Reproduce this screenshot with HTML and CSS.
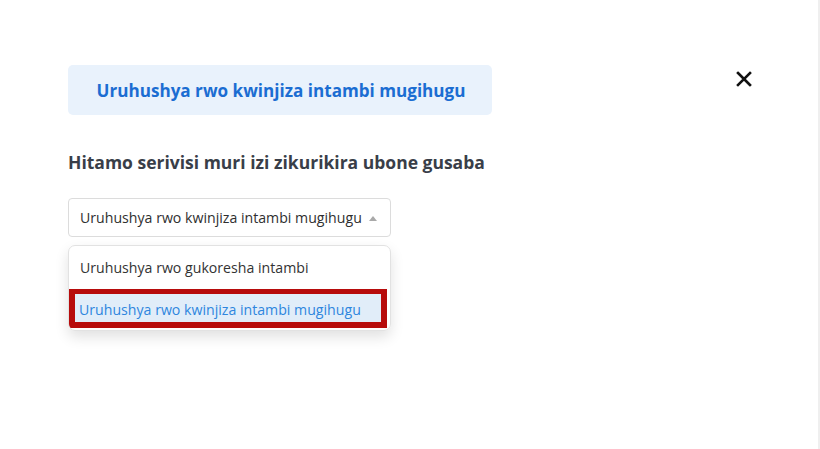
FILE: index.html
```html
<!DOCTYPE html>
<html>
<head>
<meta charset="utf-8">
<link rel="stylesheet" href="styles.css">
</head>
<body>
<div class="page">
  <div class="modal">
    <div class="top">
      <div class="badge">Uruhushya rwo kwinjiza intambi mugihugu</div>
      <button class="close" aria-label="close">
        <svg width="16" height="16" viewBox="0 0 16 16"><path d="M2 2 L14 14 M14 2 L2 14" stroke="#111" stroke-width="2.6" stroke-linecap="square"/></svg>
      </button>
    </div>
    <h2 class="title">Hitamo serivisi muri izi zikurikira ubone gusaba</h2>
    <div class="select-wrap">
      <div class="select">
        <span>Uruhushya rwo kwinjiza intambi mugihugu</span>
        <span class="arrow"></span>
      </div>
      <ul class="menu">
        <li class="opt">Uruhushya rwo gukoresha intambi</li>
        <li class="opt active">Uruhushya rwo kwinjiza intambi mugihugu</li>
      </ul>
    </div>
  </div>
  <div class="scroll"></div>
</div>
</body>
</html>
```
FILE: styles.css
```css
* { box-sizing: border-box; }
html, body { margin: 0; padding: 0; background: #fff; }
body { font-family: "Open Sans", "Noto Sans", sans-serif; }
.page { display: flex; width: 820px; height: 449px; }
.modal { flex: 1; padding: 65px 0 0 68px; }
.scroll { width: 2px; background: #efefef; }
.top { display: flex; align-items: flex-start; width: 684px; justify-content: space-between; }
.badge {
  background: #e9f2fc; color: #1b6dd2; font-weight: 700; font-size: 17.1px;
  height: 50px; width: 424px; border-radius: 5px;
  display: flex; align-items: center; justify-content: center; padding-left: 2px;
}
.close { border: 0; background: none; padding: 0; margin-top: 6px; width: 16px; height: 16px; }
.close svg { display: block; }
.title { margin: 35px 0 0; font-size: 17.5px; font-weight: 700; color: #393e48; line-height: 24px; }
.select-wrap { margin-top: 24px; width: 323px; }
.select {
  height: 39px; border: 1px solid #dcdcdc; border-radius: 4px;
  display: flex; align-items: center; justify-content: space-between;
  padding: 0 13px 0 11px; font-size: 14.15px; color: #2f2f2f;
}
.arrow { width: 0; height: 0; border-left: 4px solid transparent; border-right: 4px solid transparent; border-bottom: 5px solid #a9a9a9; margin-top: 1px; }
.menu {
  list-style: none; margin: 8px 0 0; padding: 0;
  border: 1px solid #e2e2e2; border-radius: 7px; overflow: hidden;
  box-shadow: 0 6px 14px rgba(0,0,0,0.12);
  height: 86px;
}
.opt { height: 43px; padding: 0 11px; display: flex; align-items: center; font-size: 14.15px; color: #333; }
.opt.active {
  background: #e1edf9; color: #2e86de; height: 39px;
  margin-right: 3px; margin-top: 0; padding-top: 2px;
  border: solid #b70c0c; border-width: 5px 6px 6px 6px; padding-left: 4px;
}
```
